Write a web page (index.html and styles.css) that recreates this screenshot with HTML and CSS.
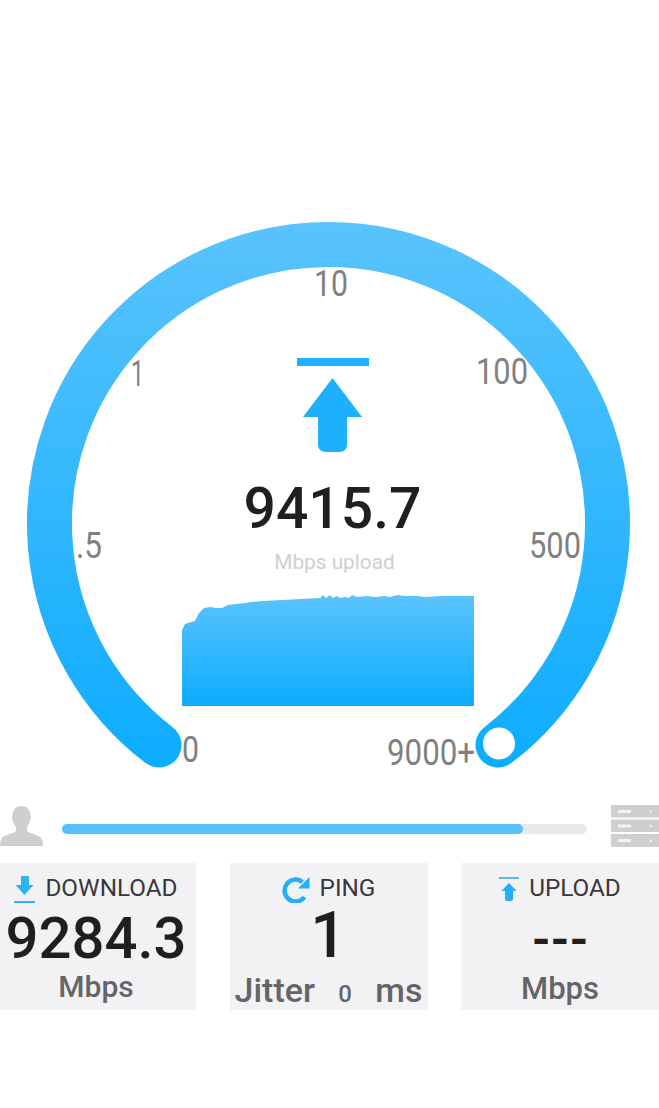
FILE: index.html
```html
<!DOCTYPE html>
<html lang="en">

<head>
    <meta charset="UTF-8">
    <meta name="viewport" content="width=device-width, initial-scale=1.0">
    <title>Speed Test</title>
    <link rel="stylesheet" href="styles.css">
</head>

<body>
    <svg class="gauge" viewBox="0 0 659 805" xmlns="http://www.w3.org/2000/svg">
        <defs>
            <linearGradient id="dial-fill" gradientUnits="userSpaceOnUse" x1="0" y1="222" x2="0" y2="768">
                <stop offset="0" stop-color="#5ac3fc" />
                <stop offset="1" stop-color="#0dacff" />
            </linearGradient>
            <linearGradient id="graph-fill" gradientUnits="userSpaceOnUse" x1="0" y1="596" x2="0" y2="706">
                <stop offset="0" stop-color="#5ac3fc" />
                <stop offset="1" stop-color="#0dacff" />
            </linearGradient>
        </defs>

        <!-- dial -->
        <path class="dial" d="M159 745 A279 279 0 1 1 498 745" />
        <circle class="dial-knob" cx="499" cy="743.500" r="16" />

        <!-- scale labels -->
        <text class="tick" x="314" y="296" textLength="34" lengthAdjust="spacingAndGlyphs">10</text>
        <text class="tick" x="131" y="386" textLength="13" lengthAdjust="spacingAndGlyphs">1</text>
        <text class="tick" x="476" y="384" textLength="52" lengthAdjust="spacingAndGlyphs">100</text>
        <text class="tick" x="76" y="558" textLength="26" lengthAdjust="spacingAndGlyphs">.5</text>
        <text class="tick" x="529" y="558" textLength="52" lengthAdjust="spacingAndGlyphs">500</text>
        <text class="tick" x="182" y="762" textLength="17" lengthAdjust="spacingAndGlyphs">0</text>
        <text class="tick" x="387" y="765" textLength="88" lengthAdjust="spacingAndGlyphs">9000+</text>

        <!-- upload arrow -->
        <rect class="accent" x="297" y="358" width="72" height="8" />
        <path class="accent" d="M332.5 378 L362 417 H347 V444 Q347 452 339 452 H326 Q318 452 318 444 V417 H303 Z" />

        <text class="speed" x="332.5" y="528">9415.7</text>
        <text class="speed-unit" x="334.5" y="569">Mbps upload</text>

        <!-- live graph -->
        <path class="graph" d="M182 706 V630 L185 624 L191 622 L195 621 L199 613 L204 608 L210 607 L216 608 L222 608 L228 605 L236 604 L246 603 L250 602 L262 601 L283 600 L300 599 L320 598 L323 595 L326 598 L330 595 L333 598 L337 596 L340 598 L345 597 L349 598 L352 595 L358 597 L366 596 L376 597 L384 596 L390 597 L397 595 L405 596 L418 596 L425 597 L440 596 L453 596 L474 596 V706 Z" />
    </svg>

    <div class="progress-row">
        <svg class="client-icon" viewBox="0 0 43 40" xmlns="http://www.w3.org/2000/svg">
            <path d="M21.500 0 C27 0 30.500 4 30.500 10 C31.500 10.500 31.500 13 30 15 C29.500 18 28 20 27 21 L27 25 C29 27.500 36 28 40 31 C42 32.500 43 36 43 40 H0 C0 36 1 32.500 3 31 C7 28 14 27.500 16 25 L16 21 C15 20 13.500 18 13 15 C11.500 13 11.500 10.500 12.500 10 C12.500 4 16 0 21.500 0 Z" />
        </svg>
        <div class="progress-track">
            <div class="progress-fill" style="width: 87.800%"></div>
        </div>
        <svg class="server-icon" viewBox="0 0 48 42" xmlns="http://www.w3.org/2000/svg">
            <rect class="rack" x="0" y="0" width="48" height="12.500" />
            <rect class="rack" x="0" y="14.500" width="48" height="12.500" />
            <rect class="rack" x="0" y="29" width="48" height="13" />
            <rect class="led" x="7" y="5" width="13" height="3" />
            <rect class="led" x="39" y="5.500" width="2" height="2" />
            <rect class="led" x="7" y="19.500" width="13" height="3" />
            <rect class="led" x="39" y="20" width="2" height="2" />
            <rect class="led" x="7" y="34" width="13" height="3" />
            <rect class="led" x="39" y="34.500" width="2" height="2" />
        </svg>
    </div>

    <div class="results">
        <div class="result">
            <div class="result-head">
                <svg class="result-icon" viewBox="0 0 21 27" xmlns="http://www.w3.org/2000/svg">
                    <path d="M7 0 H15 V9 H19.500 L10.500 19 L1.500 9 H7 Z" />
                    <rect x="0" y="25" width="21" height="2" />
                </svg>
                <span>DOWNLOAD</span>
            </div>
            <div class="result-value">9284.3</div>
            <div class="result-unit">Mbps</div>
        </div>

        <div class="result">
            <div class="result-head">
                <svg class="ping-icon" viewBox="0 0 28 27" xmlns="http://www.w3.org/2000/svg">
                    <path class="ping-ring" d="M22.500 21 A11 11 0 1 1 20.500 6" />
                    <path d="M27.500 1 V12.500 H16 Z" />
                </svg>
                <span>PING</span>
            </div>
            <div class="result-value ping-value">1</div>
            <div class="result-unit jitter">
                <span>Jitter</span>
                <span class="jitter-value">0</span>
                <span>ms</span>
            </div>
        </div>

        <div class="result">
            <div class="result-head">
                <svg class="upload-icon" viewBox="0 0 20 26" xmlns="http://www.w3.org/2000/svg">
                    <rect class="upload-bar" x="0" y="0" width="20" height="2" />
                    <path d="M10 6 L17.500 14 H14 V22 Q14 24 12 24 H8 Q6 24 6 22 V14 H2.500 Z" />
                </svg>
                <span>UPLOAD</span>
            </div>
            <div class="result-value idle-value">---</div>
            <div class="result-unit idle-unit">Mbps</div>
        </div>
    </div>
</body>

</html>
```

FILE: styles.css
```css
body {
    margin: 0;
    background-color: #ffffff;
    font-family: Roboto, "Liberation Sans", sans-serif;
    color: #1f1f22;
    overflow: hidden;
}

.gauge {
    display: block;
    width: 659px;
    height: 805px;
}

.dial {
    fill: none;
    stroke: url(#dial-fill);
    stroke-width: 45;
    stroke-linecap: round;
}

.dial-knob {
    fill: #ffffff;
}

.tick {
    font-size: 36px;
    fill: #808080;
}

.accent {
    fill: #1cb0fd;
}

.speed {
    font-size: 57px;
    font-weight: 500;
    fill: #1f1f22;
    text-anchor: middle;
}

.speed-unit {
    font-size: 20.800px;
    fill: #cfcfd1;
    text-anchor: middle;
}

.graph {
    fill: url(#graph-fill);
}

.progress-row {
    display: flex;
    align-items: center;
    height: 42px;
    margin-bottom: 16px;
}

.client-icon {
    width: 43px;
    height: 40px;
    fill: #cfcfd1;
}

.progress-track {
    flex: 1;
    height: 10px;
    margin: 6px 24px 0 19px;
    border-radius: 5px;
    background-color: #e9e9eb;
}

.progress-fill {
    height: 100%;
    border-radius: 5px;
    background-color: #56c1fa;
}

.server-icon {
    width: 48px;
    height: 42px;
}

.rack {
    fill: #cfcfd1;
}

.led {
    fill: #f4f4f4;
}

.results {
    display: grid;
    grid-template-columns: 196px 198px 198px;
    justify-content: space-between;
}

.result {
    display: flex;
    flex-direction: column;
    align-items: center;
    height: 147px;
    padding-top: 10px;
    box-sizing: border-box;
    background-color: #f2f2f4;
}

.result:first-child {
    padding-right: 4px;
}

.result-head {
    display: flex;
    align-items: center;
    gap: 10px;
    height: 28px;
    margin-bottom: 2px;
    font-size: 24.300px;
    color: #38383c;
}

.result-head svg {
    margin-top: 5px;
}

.result-icon {
    width: 21px;
    height: 27px;
    fill: #2fb2f6;
}

.ping-icon {
    width: 28px;
    height: 27px;
    fill: #22aef8;
}

.ping-ring {
    fill: none;
    stroke: #22aef8;
    stroke-width: 4.500;
}

.upload-icon {
    width: 20px;
    height: 26px;
    fill: #22aef8;
}

.upload-bar {
    fill: #5ab8ea;
}

.result-value {
    font-size: 58px;
    font-weight: 500;
    line-height: 70px;
}

.ping-value {
    font-size: 64px;
    line-height: 66px;
}

.idle-value {
    font-size: 48px;
    font-weight: 700;
    line-height: 73px;
}

.result-unit {
    font-size: 30px;
    font-weight: 500;
    line-height: 28px;
    color: #656568;
}

.idle-unit {
    font-size: 31px;
    line-height: 25px;
}

.jitter {
    display: flex;
    align-items: baseline;
    justify-content: space-between;
    width: 100%;
    padding: 0 5px;
    box-sizing: border-box;
    font-size: 34px;
    line-height: 43px;
}

.jitter-value {
    font-size: 24px;
}
```
